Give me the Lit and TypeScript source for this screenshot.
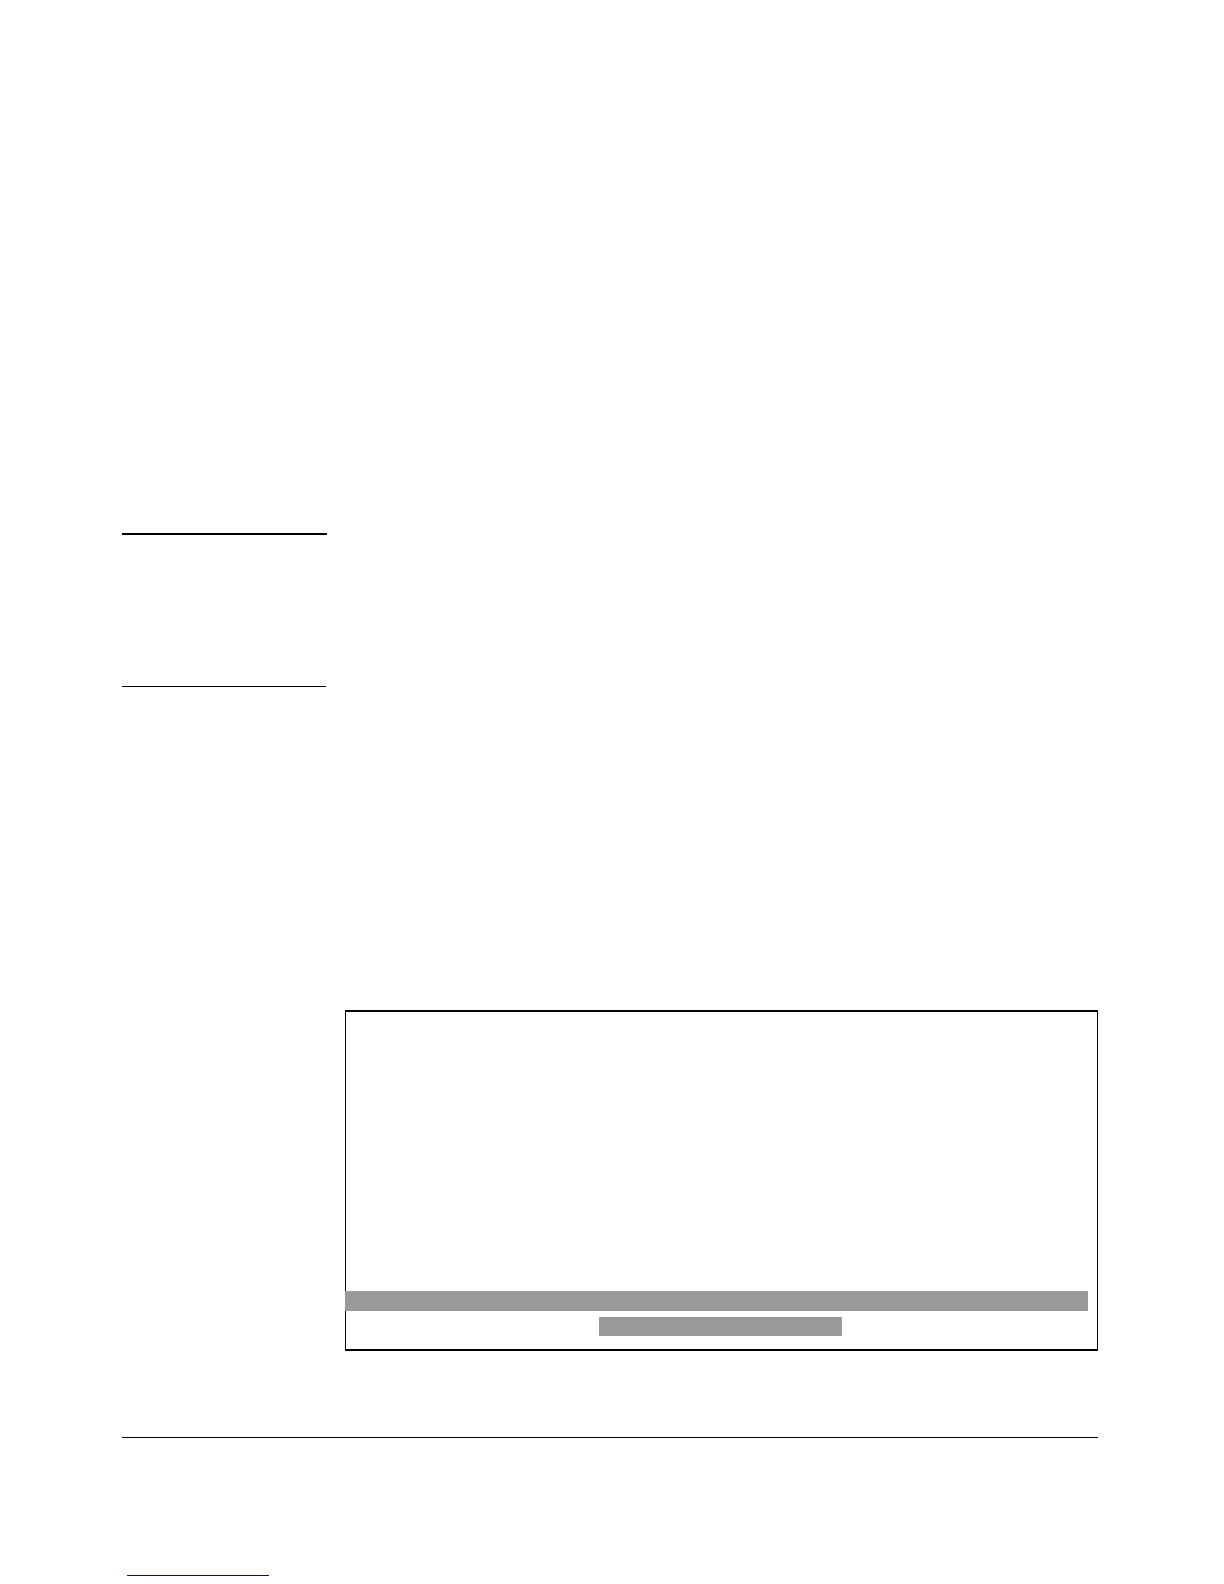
import { LitElement, html, css } from "lit";
import { customElement } from "lit/decorators.js";

@customElement("app-root")
export class AppRoot extends LitElement {
  static styles = css`
    :host {
      display: block;
      background: #fff;
      color: #000;
      font-family: "Liberation Serif", serif;
    }
    .page {
      display: flex;
      flex-direction: column;
      padding: 533px 126px 8px 122px;
    }
    .note {
      width: 205px;
      height: 151px;
      border-top: 2px solid #000;
    }
    .rule {
      width: 100%;
      height: 1px;
      margin: 0;
      border: 0;
      background: #000;
    }
    .side {
      width: 204px;
    }
    .panel {
      display: flex;
      flex-direction: column;
      gap: 6px;
      margin: 323px 0 86px 223px;
      padding: 279px 0 13px;
      border: solid #000;
      border-width: 2px 1px;
    }
    .bar {
      height: 20px;
      margin: 0 9px 0 -1px;
      background: #999;
    }
    .short {
      width: 243px;
      height: 19px;
      margin: 0 0 0 253px;
    }
    .link {
      width: 142px;
      margin: 137px 0 0 5px;
      background: #0a0a80;
    }
  `;

  render() {
    return html`
      <main class="page">
        <section class="note"></section>
        <hr class="rule side" />
        <section class="panel">
          <div class="bar"></div>
          <div class="bar short"></div>
        </section>
        <hr class="rule" />
        <hr class="rule link" />
      </main>
    `;
  }
}
